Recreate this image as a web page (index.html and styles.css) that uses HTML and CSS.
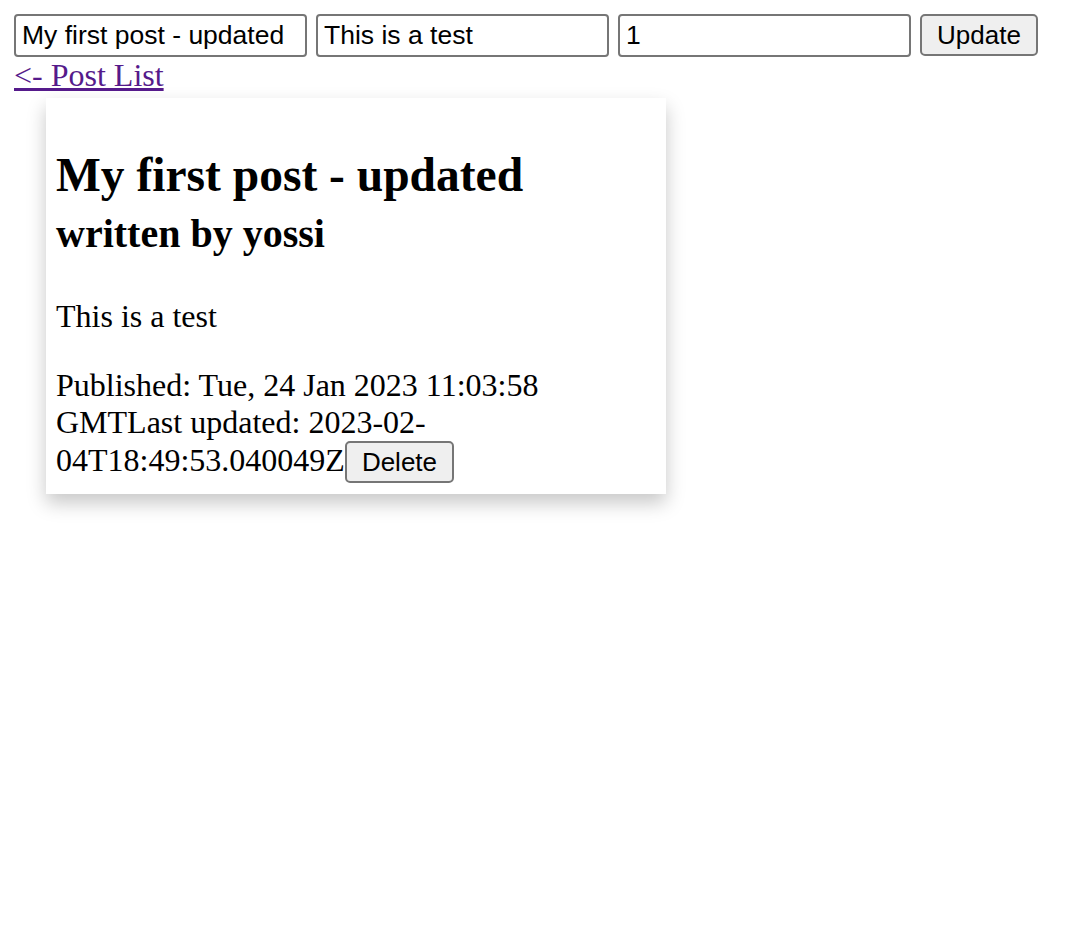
FILE: index.html
```html
<!DOCTYPE html>
<html>
<head>
<meta charset="utf-8">
<link rel="stylesheet" href="styles.css">
</head>
<body>
<form class="edit-form">
  <input class="field" type="text" value="My first post - updated">
  <input class="field" type="text" value="This is a test">
  <input class="field" type="text" value="1">
  <button class="btn" type="button">Update</button>
</form>
<a class="back-link" href="#">&lt;- Post List</a>
<div class="card">
  <h1 class="post-title">My first post - updated</h1>
  <h2 class="post-author">written by yossi</h2>
  <p class="post-body">This is a test</p>
  <p class="post-meta">Published: Tue, 24 Jan 2023 11:03:58 GMTLast updated: 2023-02-04T18:49:53.040049Z<button class="btn" type="button">Delete</button></p>
</div>
</body>
</html>
```
FILE: styles.css
```css
html {
  background: #ffffff;
  min-height: 100%;
}
body {
  margin: 14px;
  min-height: 880px;
  font-family: "Liberation Serif", "Times New Roman", serif;
  font-size: 32px;
  color: #000;
}
.edit-form {
  display: flex;
  align-items: flex-start;
  gap: 9px;
  margin: 0;
}
.field {
  box-sizing: border-box;
  width: 293px;
  height: 43px;
  margin: 0;
  padding: 0 6px;
  border: 2px solid #767676;
  border-radius: 4px;
  font-family: "Liberation Sans", Arial, sans-serif;
  font-size: 26.5px;
  color: #000;
  background: #fff;
  outline: none;
}
.btn {
  box-sizing: border-box;
  height: 42px;
  margin: 0;
  padding: 0 15px;
  border: 2px solid #767676;
  border-radius: 5px;
  background: #efefef;
  font-family: "Liberation Sans", Arial, sans-serif;
  font-size: 26px;
  color: #000;
}
.back-link {
  display: block;
  width: max-content;
  color: #551a8b;
  text-decoration: underline;
}
.card {
  box-sizing: border-box;
  width: 620px;
  margin: 4px 0 0 32px;
  padding: 10px 10px 11px;
  background: #fff;
  box-shadow: 0 9px 18px rgba(0, 0, 0, 0.22);
}
.post-title {
  font-size: 47.5px;
  margin: 40px 0 8px;
}
.post-author {
  font-size: 40px;
  margin: 8px 0 41px;
}
.post-body {
  margin: 0 0 32px;
}
.post-meta {
  margin: 0;
}
```
